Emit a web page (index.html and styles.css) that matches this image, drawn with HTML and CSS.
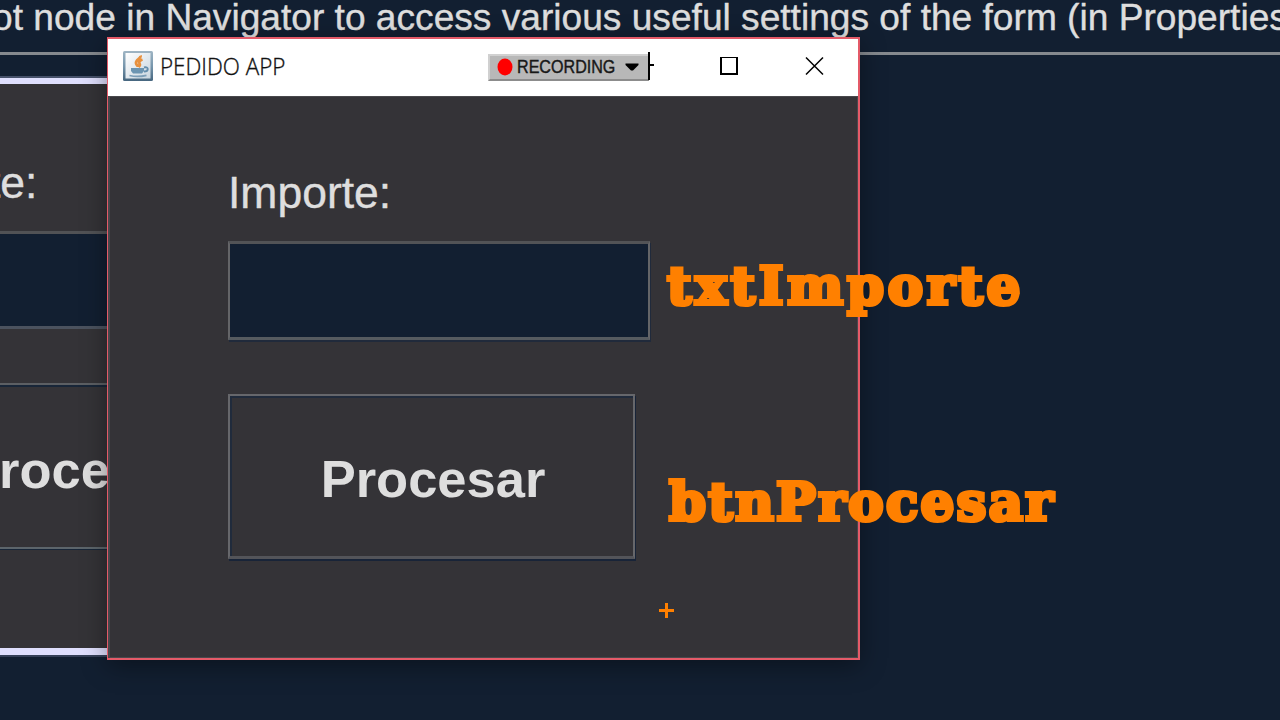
FILE: index.html
```
<!DOCTYPE html>
<html lang="es">
<head>
<meta charset="utf-8">
<title>PEDIDO APP</title>
<link rel="stylesheet" href="styles.css">
</head>
<body>
<main class="desktop">
  <div class="hint"><span class="hint-text">ot node in Navigator to access various useful settings of the form (in Properties</span></div>
  <section class="designer">
    <div class="design-label">te:</div>
    <div class="design-field"></div>
    <div class="design-button"><span>roce</span></div>
  </section>

  <section class="window">
    <header class="titlebar">
      <svg class="java" viewBox="0 0 30 30">
        <defs>
          <linearGradient id="edge" x2="0" y2="1"><stop stop-color="#9fb5c4"/><stop offset=".5" stop-color="#7897ad"/><stop offset="1" stop-color="#46667f"/></linearGradient>
          <linearGradient id="face" x2="1" y2="1"><stop stop-color="#fff"/><stop offset="1" stop-color="#c8d5df"/></linearGradient>
        </defs>
        <rect width="30" height="30" rx="1.5" fill="url(#edge)"/>
        <rect x="2.5" y="2" width="25" height="25.5" fill="url(#face)"/>
        <path d="M17.500 4.500c1 3-5 4-4.500 7.500.2 2 2 2.500 2 4M19.500 8.500c-3 1-4 2.500-3 4 .8 1.300.2 2.500-1 3.500" fill="none" stroke="#e8913f" stroke-width="2.800"/>
        <path d="M8 17h13v3l-2 2.500h-9L8 20z" fill="#6c95b2"/>
        <path d="M21 16.500c5-1.500 5 4 0 4" fill="none" stroke="#628dac" stroke-width="1.900"/>
        <path d="M6.500 24.500q8 2 17-.2" fill="none" stroke="#7c9eb7" stroke-width="1.700"/>
      </svg>
      <span class="title">PEDIDO APP</span>
      <div class="recorder">
        <svg class="dot" viewBox="0 0 16 18"><ellipse cx="8" cy="9" rx="7.500" ry="8.500" fill="#f00"/></svg>
        <span class="rec-text">RECORDING</span>
        <svg class="arrow" viewBox="0 0 14 8"><path d="M.5.5h13v1.500L8 7.500H6L.5 2z" fill="#000"/></svg>
      </div>
      <svg class="controls" viewBox="0 0 210 56" shape-rendering="crispEdges">
        <path d="M0 13h2v28h-2zM2 25h4v2h-4z" fill="#000"/>
        <path d="M72 18h18v18h-18zM74 19v15h14v-15z" fill="#000" fill-rule="evenodd"/>
        <path d="M158 18.500l17 17M175 18.500l-17 17" stroke="#000" stroke-width="1.500" shape-rendering="auto"/>
      </svg>
    </header>
    <div class="form">
      <label class="label">Importe:</label>
      <div class="field"></div>
      <div class="button"><span>Procesar</span></div>
    </div>
  </section>

  <div class="note note-field">txtImporte</div>
  <div class="note note-button">btnProcesar</div>
  <svg class="cross" viewBox="0 0 15 15"><path d="M6 0h3v6h6v3h-6v6h-3v-6h-6v-3h6z" fill="#ff8000"/></svg>
</main>
</body>
</html>
```
FILE: styles.css
```
* { box-sizing: border-box; }
body { margin: 0; background: #121f31; font-family: "Liberation Sans", Arial, sans-serif; color: #dedede; }
.desktop { position: relative; width: 1280px; height: 720px; overflow: hidden; background: #121f31; }

.hint { height: 55px; border-bottom: 3px solid #85898e; overflow: hidden; }
.hint-text { display: block; width: max-content; margin-left: -8px; margin-top: -5px; font-size: 37.5px; line-height: 44px; white-space: pre; transform: scaleX(.99); transform-origin: 0 0; -webkit-text-stroke: .4px #dedede; }

.designer { display: flex; flex-direction: column; width: 600px; height: 577px; margin-top: 23px; background: #343337; border-top: 6px solid #dfdffd; border-bottom: 7px solid #dfdffd; box-shadow: 0 -2px #46516a, 0 2px #354058; }
.design-label { height: 147px; padding-top: 74px; margin-left: -12px; font-size: 44.5px; line-height: 50px; -webkit-text-stroke: .4px #dedede; }
.design-field { height: 98px; border-top: 3px solid #515255; border-bottom: 3px solid #4b525e; background: #121f31; }
.design-button { height: 166px; margin-top: 54px; border-top: 2px solid #5c5f63; border-bottom: 2px solid #5c656b; box-shadow: inset 0 2px #182638, 0 1px #182638; padding-top: 55px; font-size: 52.5px; line-height: 60px; font-weight: bold; }
.design-button span { margin-left: -1px; }

.window { position: absolute; left: 107px; top: 37px; width: 753px; height: 623px; border: 2px solid #e45a68; border-left-width: 1px; background: #343337; box-shadow: 0 6px 24px rgba(0, 0, 0, .38); }
.titlebar { display: flex; align-items: flex-start; height: 57px; background: #fff; }
.java { flex: none; width: 30px; height: 30px; margin: 12px 0 0 15px; }
.title { width: 124px; margin: 10px 0 0 7px; color: #111; font-family: "Open Sans", sans-serif; font-weight: 300; font-size: 24px; line-height: 33px; white-space: nowrap; transform: scaleX(.934); transform-origin: 0 0; -webkit-text-stroke: .35px #111; }
.recorder { display: flex; align-items: center; width: 161px; height: 27px; margin: 15px 0 0 204px; padding-left: 8px; background: #b8b8b8; border-top: 2px solid #d1d1d1; border-bottom: 2px solid #8c8c8c; border-left: 2px solid #d0d0d0; }
.dot { width: 16px; height: 18px; flex: none; margin: -2px 0 0 -1px; }
.rec-text { width: 98px; margin: -2px 0 0 4px; color: #181818; font-size: 17.5px; line-height: 20px; -webkit-text-stroke: .4px #181818; white-space: nowrap; transform: scaleX(.92); transform-origin: 0 0; }
.arrow { width: 14px; height: 8px; flex: none; margin: -1px 0 0 10px; }
.controls { width: 210px; height: 56px; flex: none; margin-left: -1px; }

.form { height: 562px; padding: 69px 0 0 118px; border: solid #48484c; border-width: 1px 1px 1px 2px; }
.label { display: block; height: 75px; padding-top: 2px; font-size: 44.5px; line-height: 50px; -webkit-text-stroke: .4px #dedede; }
.field { width: 422px; height: 99px; background: #121f31; border: 2px solid #646568; border-top: 3px solid #525356; border-bottom: 3px solid #565b60; box-shadow: 1px 2px #202a3b; }
.button { display: flex; justify-content: center; width: 407px; height: 165px; margin-top: 54px; padding: 53px 0 0 3px; border: 2px solid #66676b; border-bottom: 3px solid #535459; box-shadow: inset 2px 2px #202b3c, 1px 2px #182438; font-size: 52.5px; line-height: 60px; font-weight: bold; }

.note { position: absolute; color: #ff8000; font-family: "DejaVu Serif", serif; font-weight: bold; font-size: 53px; line-height: 65px; white-space: nowrap; -webkit-text-stroke: 4px #ff8000; text-shadow: 1px 0 #ff8000, -1px 0 #ff8000; }
.note-field { left: 667px; top: 253px; letter-spacing: 3.7px; }
.note-button { left: 669px; top: 469px; letter-spacing: 2.3px; }
.cross { position: absolute; left: 659px; top: 603px; width: 15px; height: 15px; }
```
